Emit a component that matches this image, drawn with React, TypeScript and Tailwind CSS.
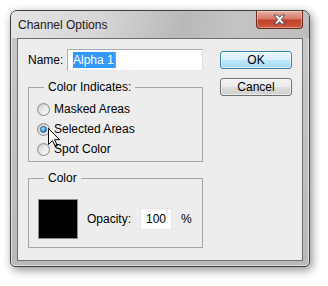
import React from "react";

const font = { fontFamily: '"Liberation Sans", Arial, sans-serif' };

function Radio({ checked }: { checked?: boolean }) {
  return (
    <span className="relative flex h-[13px] w-[13px] items-center justify-center rounded-full border border-[#8a8a8a] bg-[linear-gradient(135deg,#c8c8c8,#f4f4f4)]">
      {checked ? (
        <span className="h-[7px] w-[7px] rounded-full border border-[#1b5c99] bg-[radial-gradient(circle_at_35%_30%,#bfe9ff_0%,#3fb0ee_45%,#0b63b8_100%)]" />
      ) : (
        <span className="h-[9px] w-[9px] rounded-full bg-[linear-gradient(135deg,#d4d4d4,#fbfbfb)]" />
      )}
    </span>
  );
}

function Cursor() {
  return (
    <svg width="13" height="20" viewBox="0 0 13 20" className="absolute left-[11px] top-[9px]">
      <path
        d="M0.5 0.5 L0.5 16.5 L4.5 12.5 L7.3 18.5 L9.3 17.6 L6.6 11.7 L11.5 11.7 Z"
        fill="#fff"
        stroke="#000"
        strokeWidth="1"
        strokeLinejoin="miter"
      />
    </svg>
  );
}

export default function App() {
  const options = [
    { label: "Masked Areas", checked: false },
    { label: "Selected Areas", checked: true },
    { label: "Spot Color", checked: false },
  ];

  return (
    <div className="h-[286px] w-[328px] bg-white pl-[10px] pt-[10px] text-[12px] text-black" style={font}>
      <div className="flex h-[257px] w-[300px] flex-col rounded-t-[7px] rounded-b-[5px] border border-[#3f3f3f] bg-[linear-gradient(180deg,#c9c9c9,#b9b9b9)] shadow-[2px_3px_10px_rgba(0,0,0,0.45),inset_0_0_0_1px_rgba(255,255,255,0.55)]">
        {/* title bar */}
        <div className="flex h-[27px] shrink-0 rounded-t-[6px] bg-[linear-gradient(100deg,#e4e4e4_0%,#d6d6d6_30%,#b8b8b8_58%,#c4c4c4_75%,#bdbdbd_100%)]">
          <div className="flex flex-1 items-center pl-[7px] pt-[1px] text-[#1b1b1b]">Channel Options</div>
          <div className="mr-[6px] flex h-[18px] w-[47px] items-center justify-center rounded-b-[4px] border border-t-0 border-[#6e2a20] bg-[linear-gradient(180deg,#eab1a3_0%,#d7786a_45%,#c0412e_55%,#cf5a3f_100%)] shadow-[inset_0_0_0_1px_rgba(255,255,255,0.35)]">
            <svg width="13" height="11" viewBox="0 0 13 11">
              <path
                d="M1 1 H4.5 L6.5 3.3 L8.5 1 H12 L8.3 5.5 L12 10 H8.5 L6.5 7.7 L4.5 10 H1 L4.7 5.5 Z"
                fill="#fff"
                stroke="#4a4a4a"
                strokeWidth="1"
                strokeLinejoin="round"
              />
            </svg>
          </div>
        </div>

        {/* client area */}
        <div className="mb-[5px] ml-[6px] mr-[6px] flex h-[223px] border border-[#6f6f6f] bg-[#ededed]">
          <div className="flex w-[185px] flex-col pl-[10px] pt-[10px]">
            <div className="flex h-[22px] items-center">
              <span className="w-[39px]">Name:</span>
              <div className="flex h-[22px] w-[136px] items-center border border-[#abadb3] border-b-[#e3e9ef] border-r-[#dbdfe6] bg-white pl-[5px]">
                <span className="flex h-[16px] items-center bg-[#3399ff] pr-[1px] text-white">Alpha 1</span>
                <span className="h-[16px] w-[1px] bg-[#f08a24]" />
              </div>
            </div>

            <fieldset className="mt-[8px] w-[175px] border border-[#a5a5a5] px-[8px] pb-[2px]">
              <legend className="ml-[7px] px-[4px] leading-[16px]">Color Indicates:</legend>
              <div className="flex flex-col pt-[4px]">
                {options.map((o) => (
                  <div key={o.label} className="relative flex h-[20px] items-center gap-[4px]">
                    <Radio checked={o.checked} />
                    <span>{o.label}</span>
                    {o.checked && <Cursor />}
                  </div>
                ))}
              </div>
            </fieldset>

            <fieldset className="mt-[8px] w-[175px] border border-[#a5a5a5] pb-[8px] pl-[9px]">
              <legend className="ml-[6px] px-[4px] leading-[16px]">Color</legend>
              <div className="flex items-center pt-[13px]">
                <div className="h-[40px] w-[40px] border border-[#8c8c8c] bg-black" />
                <span className="ml-[9px] w-[53px]">Opacity:</span>
                <div className="flex h-[22px] w-[32px] items-center justify-center border border-[#e6e6e6] bg-white">100</div>
                <span className="ml-[9px]">%</span>
              </div>
            </fieldset>
          </div>

          <div className="flex flex-col gap-[9px] pl-[17px] pt-[12px]">
            <button className="flex h-[18px] w-[72px] items-center justify-center rounded-[3px] border border-[#3c7fb1] bg-[linear-gradient(180deg,#eaf6fd_0%,#d9f0fc_50%,#bee6fd_51%,#a7d9f5_100%)] shadow-[inset_0_0_0_1px_rgba(255,255,255,0.6)]">
              OK
            </button>
            <button className="flex h-[18px] w-[72px] items-center justify-center rounded-[3px] border border-[#707070] bg-[linear-gradient(180deg,#f2f2f2_0%,#ebebeb_50%,#dddddd_51%,#cfcfcf_100%)] shadow-[inset_0_0_0_1px_rgba(255,255,255,0.6)]">
              Cancel
            </button>
          </div>
        </div>
      </div>
    </div>
  );
}
